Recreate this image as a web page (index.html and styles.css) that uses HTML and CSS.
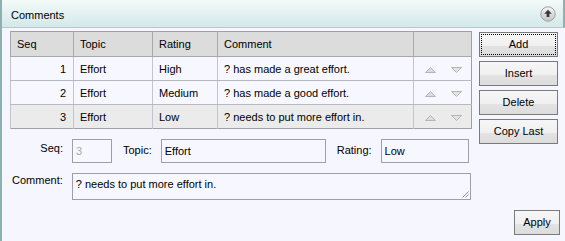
FILE: index.html
```html
<!DOCTYPE html>
<html>
<head>
<meta charset="utf-8">
<link rel="stylesheet" href="styles.css">
</head>
<body>
<div class="panel">
  <div class="hdr">
    <span class="title">Comments</span>
    <span class="collapse">
      <svg width="16" height="16" viewBox="0 0 16 16">
        <defs>
          <linearGradient id="g" x1="0" y1="0" x2="0" y2="1">
            <stop offset="0" stop-color="#f6f6f6"/>
            <stop offset="1" stop-color="#c4c4c4"/>
          </linearGradient>
        </defs>
        <circle cx="8" cy="8" r="7.2" fill="url(#g)" stroke="#a0a0a0" stroke-width="1"/>
        <path d="M8 3.8 L11.8 7.8 L9.4 7.8 L9.4 11 L6.6 11 L6.6 7.8 L4.2 7.8 Z" fill="#3a3a3a"/>
      </svg>
    </span>
  </div>
  <div class="content">
    <div class="main">
      <table class="grid">
        <colgroup>
          <col class="c1"><col class="c2"><col class="c3"><col class="c4"><col class="c5">
        </colgroup>
        <thead>
          <tr><th>Seq</th><th>Topic</th><th>Rating</th><th>Comment</th><th></th></tr>
        </thead>
        <tbody>
          <tr><td class="num">1</td><td>Effort</td><td>High</td><td>? has made a great effort.</td><td class="arr"><svg class="tri up" width="11" height="6" viewBox="0 0 11 6"><path d="M0.5 5.5 L5.5 0.5 L10.5 5.5 Z" fill="#dcdcdc" stroke="#b4b4b4"/></svg><svg class="tri" width="11" height="6" viewBox="0 0 11 6"><path d="M0.5 0.5 L5.5 5.5 L10.5 0.5 Z" fill="#e4e4e4" stroke="#b4b4b4"/></svg></td></tr>
          <tr><td class="num">2</td><td>Effort</td><td>Medium</td><td>? has made a good effort.</td><td class="arr"><svg class="tri up" width="11" height="6" viewBox="0 0 11 6"><path d="M0.5 5.5 L5.5 0.5 L10.5 5.5 Z" fill="#dcdcdc" stroke="#b4b4b4"/></svg><svg class="tri" width="11" height="6" viewBox="0 0 11 6"><path d="M0.5 0.5 L5.5 5.5 L10.5 0.5 Z" fill="#e4e4e4" stroke="#b4b4b4"/></svg></td></tr>
          <tr class="sel"><td class="num">3</td><td>Effort</td><td>Low</td><td>? needs to put more effort in.</td><td class="arr"><svg class="tri up" width="11" height="6" viewBox="0 0 11 6"><path d="M0.5 5.5 L5.5 0.5 L10.5 5.5 Z" fill="#dcdcdc" stroke="#b4b4b4"/></svg><svg class="tri" width="11" height="6" viewBox="0 0 11 6"><path d="M0.5 0.5 L5.5 5.5 L10.5 0.5 Z" fill="#e4e4e4" stroke="#b4b4b4"/></svg></td></tr>
        </tbody>
      </table>
      <div class="form">
        <div class="frow">
          <label class="lbl">Seq:</label>
          <div class="inp seq">3</div>
          <label class="lbl2">Topic:</label>
          <div class="inp topic">Effort</div>
          <label class="lbl2">Rating:</label>
          <div class="inp rating">Low</div>
        </div>
        <div class="frow crow">
          <label class="lbl lblc">Comment:</label>
          <div class="inp comment">? needs to put more effort in.
            <svg class="grip" width="8" height="8" viewBox="0 0 8 8"><path d="M7.5 1.5 L1.5 7.5 M7.5 4.5 L4.5 7.5" stroke="#8a8a8a" stroke-width="1"/></svg>
          </div>
        </div>
      </div>
    </div>
    <div class="btns">
      <div class="btn focus">Add</div>
      <div class="btn">Insert</div>
      <div class="btn">Delete</div>
      <div class="btn">Copy Last</div>
    </div>
  </div>
  <div class="footer">
    <div class="btn apply">Apply</div>
  </div>
</div>
</body>
</html>
```

FILE: styles.css
```css
html, body {
  margin: 0;
  padding: 0;
  background: #f5f6ff;
}
body {
  font-family: "Liberation Sans", Arial, sans-serif;
  font-size: 11px;
  color: #000;
}
.panel {
  width: 565px;
  height: 241px;
  border-left: 2px solid #8eb0b0;
  box-sizing: border-box;
  background: #f5f6ff;
}
.hdr {
  height: 27px;
  border-bottom: 1px solid #b8c8c8;
  border-right: 2px solid #8eb0b0;
  background: linear-gradient(to bottom, #f4fafa 0%, #e4f2f2 45%, #d4e9e9 100%);
  display: flex;
  align-items: center;
  justify-content: space-between;
  padding: 0 7px 0 9px;
}
.title {
  padding-top: 2px;
}
.collapse {
  display: flex;
  margin-top: 1px;
}
.content {
  display: flex;
  padding: 3px 0 0 8px;
}
.main {
  width: 461px;
}
.grid {
  border-collapse: collapse;
  width: 461px;
  table-layout: fixed;
  border: 1px solid #a0a0a0;
}
.c1 { width: 63px; }
.c2 { width: 79px; }
.c3 { width: 65px; }
.c4 { width: 196px; }
.c5 { width: 58px; }
.grid th {
  background: #dcdcdc;
  font-weight: normal;
  text-align: left;
  height: 24px;
  padding: 0 6px;
  border-left: 1px solid #a8a8a8;
  border-bottom: 1px solid #a8a8a8;
}
.grid td {
  height: 23px;
  padding: 0 6px;
  border-left: 1px solid #c4c4cc;
  border-bottom: 1px solid #b8b8c0;
  background: #f7f8ff;
  white-space: nowrap;
  overflow: hidden;
}
.grid tr.sel td {
  background: #ebebeb;
  border-bottom: none;
}
.grid td.num {
  text-align: right;
  padding-right: 7px;
}
.grid td.arr {
  padding: 0 0 0 11px;
}
.tri {
  display: inline-block;
  vertical-align: middle;
}
.tri.up {
  margin-right: 15px;
}
.form {
  padding-top: 10px;
}
.frow {
  display: flex;
  align-items: flex-start;
}
.lbl {
  width: 53px;
  text-align: right;
  padding-top: 3px;
  margin-right: 9px;
}
.lblc {
  padding-top: 1px;
}
.lbl2 {
  padding-top: 5px;
  margin: 0 9px 0 11px;
}
.inp {
  box-sizing: border-box;
  height: 24px;
  border: 1px solid #a0a0a0;
  background: #f7f8ff;
  padding: 5px 0 0 3px;
  white-space: nowrap;
}
.seq { width: 40px; color: #a8a8a8; }
.topic { width: 165px; }
.rating { width: 88px; }
.crow {
  margin-top: 10px;
}
.comment {
  width: 401px;
  height: 27px;
  position: relative;
  padding-top: 4px;
}
.grip {
  position: absolute;
  right: 1px;
  bottom: 1px;
}
.btns {
  display: flex;
  flex-direction: column;
  gap: 4px;
  margin-left: 8px;
  padding-top: 1px;
}
.btn {
  box-sizing: border-box;
  width: 79px;
  height: 25px;
  border: 1px solid #7a7a7a;
  background: linear-gradient(to bottom, #f6f6f6 0%, #f0f0f0 55%, #e3e3e3 56%, #dcdcdc 100%);
  display: flex;
  align-items: center;
  justify-content: center;
  padding-bottom: 2px;
}
.btn.focus {
  outline: 1px dotted #000;
  outline-offset: -3px;
}
.footer {
  display: flex;
  justify-content: flex-end;
  padding: 10px 5px 0 0;
}
.apply {
  width: 46px;
}
```
